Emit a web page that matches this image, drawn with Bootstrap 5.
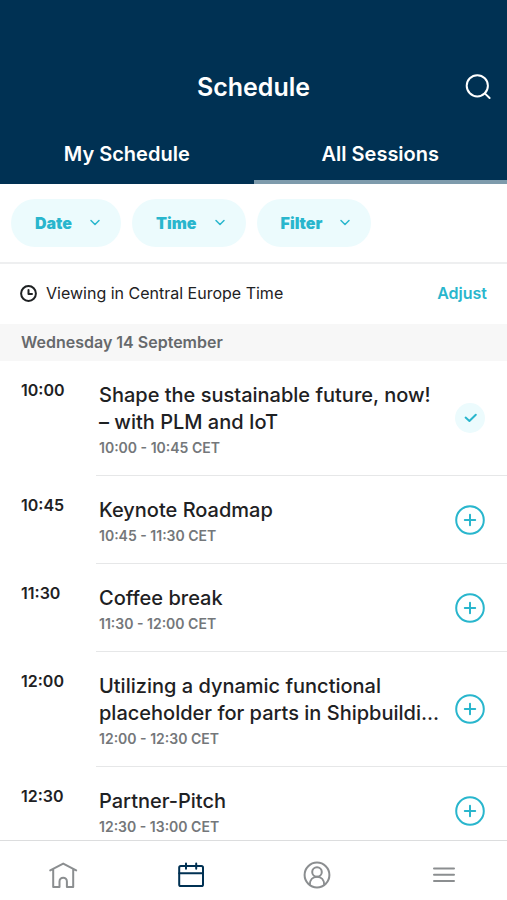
<!DOCTYPE html>
<html lang="en">
<head>
<meta charset="utf-8">
<meta name="viewport" content="width=device-width, initial-scale=1">
<title>Schedule</title>
<link href="https://cdn.jsdelivr.net/npm/bootstrap@5.3.0/dist/css/bootstrap.min.css" rel="stylesheet">
<style>
  :root { --navy: #003153; --teal: #29b6cd; --mist: #ecfbfd; --rule: #e6e7e8; }
  body { font-family: Inter, "Liberation Sans", sans-serif; color: #1e2123; background: #fff; }
  svg { display: block; fill: none; stroke: currentColor; stroke-width: 2; stroke-linecap: round; stroke-linejoin: round; }
  .app-head { background: var(--navy); padding-top: 60px; }
  .title-bar { display: grid; grid-template-columns: 1fr auto 1fr; height: 54px; padding: 0 15px; }
  .title-bar h1 { font-size: 25px; line-height: 32px; font-weight: 600; }
  .tab-link { height: 70px; padding-top: 14px; border-bottom: 4px solid transparent; font-size: 20px; line-height: 28px; font-weight: 600; }
  .tab-link.active { border-bottom-color: #7e9bac; }
  .filters { padding: 15px 11px; gap: 11px; border-bottom: 2px solid #eeeff0; }
  .pill { height: 48px; padding: 0 20px 0 24px; gap: 17px; background: var(--mist); color: var(--teal); font-size: 16px; line-height: 24px; font-weight: 900; }
  .pill svg { stroke-width: 1.5; }
  .zone { height: 60px; padding: 0 20px 2px; font-size: 16px; line-height: 24px; gap: 9px; }
  .zone a { color: var(--teal); font-weight: 600; }
  .day { padding: 6px 21px 7px; font-size: 16px; line-height: 24px; font-weight: 600; background: #f7f7f7; color: #66696c; }
  .sessions { overflow-y: auto; scrollbar-width: none; }
  .sessions::-webkit-scrollbar { display: none; }
  .session { padding-left: 21px; }
  .start { width: 75px; padding-top: 19px; font-size: 16px; line-height: 20px; font-weight: 600; }
  .entry { padding: 21px 22px 15px 3px; gap: 12px; border-bottom: 1px solid var(--rule); min-width: 0; }
  .entry h2 { font-size: 20px; line-height: 27px; font-weight: 500; }
  .entry p { font-size: 14px; line-height: 24px; font-weight: 600; color: #74777a; }
  .toggle { width: 30px; height: 30px; color: var(--teal); margin-top: -6px; }
  .toggle.added { background: var(--mist); }
  .bottom-nav { height: 60px; border-top: 1px solid #dcddde; padding-top: 8px; background: #fff; }
  .bottom-nav a { color: #8b8e90; }
  .bottom-nav a.active { color: var(--navy); }
</style>
<script src="https://cdn.jsdelivr.net/npm/bootstrap@5.3.0/dist/js/bootstrap.bundle.min.js"></script>
</head>
<body>
<div class="d-flex flex-column vh-100">
  <header class="app-head text-white flex-shrink-0">
    <div class="title-bar align-items-center">
      <span></span>
      <h1 class="m-0">Schedule</h1>
      <button type="button" class="btn p-0 border-0 text-white ms-auto" aria-label="Search">
        <svg width="28" height="28" viewBox="0 0 28 28"><circle cx="13.3" cy="12.8" r="10.6"/><path d="M20.8 20.4 25.6 25"/></svg>
      </button>
    </div>
    <nav class="d-flex" aria-label="Schedule views">
      <a href="#mine" class="tab-link w-50 d-flex align-items-center justify-content-center text-white text-decoration-none">My Schedule</a>
      <a href="#all" class="tab-link active w-50 d-flex align-items-center justify-content-center text-white text-decoration-none" aria-current="page">All Sessions</a>
    </nav>
  </header>

  <div class="filters d-flex flex-shrink-0">
    <button type="button" class="pill btn border-0 rounded-pill d-flex align-items-center">Date<svg width="12" height="8" viewBox="0 0 12 8"><path d="M2 1.5 6 5.5 10 1.5"/></svg></button>
    <button type="button" class="pill btn border-0 rounded-pill d-flex align-items-center">Time<svg width="12" height="8" viewBox="0 0 12 8"><path d="M2 1.5 6 5.5 10 1.5"/></svg></button>
    <button type="button" class="pill btn border-0 rounded-pill d-flex align-items-center">Filter<svg width="12" height="8" viewBox="0 0 12 8"><path d="M2 1.5 6 5.5 10 1.5"/></svg></button>
  </div>

  <div class="zone d-flex align-items-center flex-shrink-0">
    <svg width="17" height="17" viewBox="0 0 17 17"><circle cx="8.5" cy="8.5" r="7.4"/><path d="M8.5 5v4H12"/></svg>
    <span>Viewing in Central Europe Time</span>
    <a href="#adjust" class="ms-auto text-decoration-none">Adjust</a>
  </div>
  <div class="day flex-shrink-0">Wednesday 14 September</div>

  <main class="sessions flex-fill">
    <article class="session d-flex">
      <time class="start flex-shrink-0">10:00</time>
      <div class="entry d-flex align-items-center flex-fill">
        <div class="flex-fill"><h2 class="m-0">Shape the sustainable future, now! – with PLM and IoT</h2><p class="m-0">10:00 - 10:45 CET</p></div>
        <button type="button" class="toggle added btn p-0 border-0 rounded-circle flex-shrink-0" aria-label="Remove from my schedule">
          <svg width="30" height="30" viewBox="0 0 30 30"><path d="m10.6 14.6 3.8 3.4 6.4-6.3"/></svg>
        </button>
      </div>
    </article>
    <article class="session d-flex">
      <time class="start flex-shrink-0">10:45</time>
      <div class="entry d-flex align-items-center flex-fill">
        <div class="flex-fill"><h2 class="m-0">Keynote Roadmap</h2><p class="m-0">10:45 - 11:30 CET</p></div>
        <button type="button" class="toggle btn p-0 border-0 rounded-circle flex-shrink-0" aria-label="Add to my schedule">
          <svg width="30" height="30" viewBox="0 0 30 30"><circle cx="15" cy="15" r="13.8"/><path d="M15 9.8v10.4M9.8 15h10.4"/></svg>
        </button>
      </div>
    </article>
    <article class="session d-flex">
      <time class="start flex-shrink-0">11:30</time>
      <div class="entry d-flex align-items-center flex-fill">
        <div class="flex-fill"><h2 class="m-0">Coffee break</h2><p class="m-0">11:30 - 12:00 CET</p></div>
        <button type="button" class="toggle btn p-0 border-0 rounded-circle flex-shrink-0" aria-label="Add to my schedule">
          <svg width="30" height="30" viewBox="0 0 30 30"><circle cx="15" cy="15" r="13.8"/><path d="M15 9.8v10.4M9.8 15h10.4"/></svg>
        </button>
      </div>
    </article>
    <article class="session d-flex">
      <time class="start flex-shrink-0">12:00</time>
      <div class="entry d-flex align-items-center flex-fill">
        <div class="flex-fill"><h2 class="m-0">Utilizing a dynamic functional placeholder for parts in Shipbuildi...</h2><p class="m-0">12:00 - 12:30 CET</p></div>
        <button type="button" class="toggle btn p-0 border-0 rounded-circle flex-shrink-0" aria-label="Add to my schedule">
          <svg width="30" height="30" viewBox="0 0 30 30"><circle cx="15" cy="15" r="13.8"/><path d="M15 9.8v10.4M9.8 15h10.4"/></svg>
        </button>
      </div>
    </article>
    <article class="session d-flex">
      <time class="start flex-shrink-0">12:30</time>
      <div class="entry d-flex align-items-center flex-fill">
        <div class="flex-fill"><h2 class="m-0">Partner-Pitch</h2><p class="m-0">12:30 - 13:00 CET</p></div>
        <button type="button" class="toggle btn p-0 border-0 rounded-circle flex-shrink-0" aria-label="Add to my schedule">
          <svg width="30" height="30" viewBox="0 0 30 30"><circle cx="15" cy="15" r="13.8"/><path d="M15 9.8v10.4M9.8 15h10.4"/></svg>
        </button>
      </div>
    </article>
  </main>

  <nav class="bottom-nav d-flex flex-shrink-0" aria-label="Main">
    <a href="#home" class="w-25 d-flex align-items-center justify-content-center" aria-label="Home">
      <svg width="30" height="28" viewBox="0 0 30 28"><path d="M2.2 9.4 15.2 2.6 28.2 9.4M5.2 8.2V26h6.3v-5.6a3.7 3.7 0 0 1 7.4 0V26h6.3V8.2"/></svg>
    </a>
    <a href="#schedule" class="active w-25 d-flex align-items-center justify-content-center" aria-label="Schedule" aria-current="page">
      <svg width="28" height="28" viewBox="0 0 28 28"><rect x="3.2" y="5" width="23.8" height="20" rx="1.6"/><path d="M3.2 12.2h23.8M10 2.4v5.4M20.2 2.4v5.4"/></svg>
    </a>
    <a href="#profile" class="w-25 d-flex align-items-center justify-content-center" aria-label="Profile">
      <svg width="28" height="28" viewBox="0 0 28 28"><circle cx="14" cy="14" r="12.4"/><circle cx="14" cy="11" r="4.8"/><path d="M6.8 23.8c0-4.8 3-8 7.2-8s7.2 3.2 7.2 8"/></svg>
    </a>
    <a href="#menu" class="w-25 d-flex align-items-center justify-content-center" aria-label="Menu">
      <svg width="24" height="18" viewBox="0 0 24 18"><path d="M2 2.5h20M2 8.7h20M2 14.9h20"/></svg>
    </a>
  </nav>
</div>
</body>
</html>
